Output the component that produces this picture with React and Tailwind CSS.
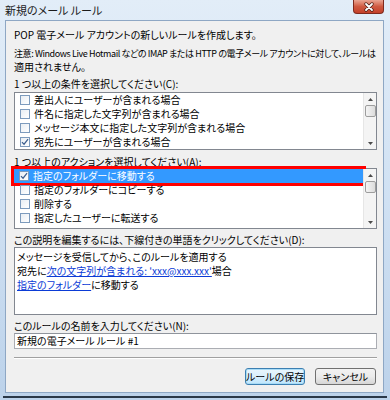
import React from "react";

const jp = "font-['Noto_Sans_CJK_JP','Liberation_Sans',sans-serif] [font-feature-settings:'palt']";

function Check({ checked }) {
  return (
    <span className="w-[10px] h-[10px] shrink-0 border border-[#7d9bbd] bg-gradient-to-br from-[#e9eef3] to-white flex items-center justify-center">
      {checked && (
        <svg viewBox="0 0 10 10" className="w-[8px] h-[8px]">
          <path d="M1.2 5.2 L3.8 7.8 L8.8 1.4" fill="none" stroke="#3d5f8f" strokeWidth="1.5" />
        </svg>
      )}
    </span>
  );
}

function ScrollBar() {
  return (
    <div className="w-[13px] bg-[#f4f4f4] border-l border-[#e6e6e6] flex flex-col items-center">
      <div className="h-[12px] flex items-center justify-center">
        <svg viewBox="0 0 5 3" className="w-[5px] h-[3px]">
          <path d="M0 3 L2.5 0 L5 3 Z" fill="#4a4a4a" />
        </svg>
      </div>
      <div className="w-[11px] h-[12px] rounded-[2px] border border-[#9d9d9d] bg-gradient-to-r from-[#f4f4f4] to-[#dcdcdc]" />
      <div className="flex-1" />
      <div className="h-[12px] flex items-center justify-center">
        <svg viewBox="0 0 5 3" className="w-[5px] h-[3px]">
          <path d="M0 0 L2.5 3 L5 0 Z" fill="#4a4a4a" />
        </svg>
      </div>
    </div>
  );
}

function Row({ label, checked, selected }) {
  return (
    <div
      className={
        "h-[14px] flex items-center gap-[4px] pl-[5px] " +
        (selected
          ? "bg-[#3399ff] text-white outline-[3px] outline-solid outline-[#ff0000] -ml-px"
          : "")
      }
    >
      <Check checked={checked} />
      <span className="leading-[14px] whitespace-nowrap">{label}</span>
    </div>
  );
}

function ListBox({ rows, height }) {
  return (
    <div className={"border border-[#828790] bg-white flex " + height}>
      <div className="flex-1 flex flex-col">
        {rows.map((r) => (
          <Row key={r.label} {...r} />
        ))}
      </div>
      <ScrollBar />
    </div>
  );
}

export default function App() {
  const conditions = [
    { label: "差出人にユーザーが含まれる場合" },
    { label: "件名に指定した文字列が含まれる場合" },
    { label: "メッセージ本文に指定した文字列が含まれる場合" },
    { label: "宛先にユーザーが含まれる場合", checked: true },
  ];
  const actions = [
    { label: "指定のフォルダーに移動する", checked: true, selected: true },
    { label: "指定のフォルダーにコピーする" },
    { label: "削除する" },
    { label: "指定したユーザーに転送する" },
  ];

  return (
    <div className={"w-[390px] h-[400px] overflow-hidden flex flex-col bg-gradient-to-b from-[#e2edf8] via-[#d0e1f3] to-[#bcd2ea] text-[10px] text-black " + jp}>
      {/* title bar */}
      <div className="h-[20px] flex justify-between pl-[5px] pr-[6px]">
        <span className="self-center text-[11px] text-[#1b1b1b] leading-[14px]">新規のメール ルール</span>
        <div className="w-[31px] h-[14px] rounded-b-[4px] border border-t-0 border-[#7e2a1e] bg-gradient-to-b from-[#e9a593] via-[#cf5a41] to-[#c4402a] flex items-center justify-center">
          <svg viewBox="0 0 12 10" className="w-[12px] h-[10px]">
            <path d="M3 2 L9 8 M9 2 L3 8" stroke="#4a1e16" strokeWidth="3.2" strokeLinecap="round" />
            <path d="M3 2 L9 8 M9 2 L3 8" stroke="#ffffff" strokeWidth="1.8" strokeLinecap="round" />
          </svg>
        </div>
      </div>

      {/* content */}
      <div className="pl-[5px] pr-[6px] flex-1 flex flex-col min-w-0">
        <div className="flex-1 min-w-0 border border-[#8ea7c4] bg-[#f0f0f0] pl-[8px] pr-[6px] pt-[7px] flex flex-col">
          <p className="leading-[14px]">POP 電子メール アカウントの新しいルールを作成します。</p>
          <p className="leading-[13px] mt-[5px] text-[9px] tracking-[-0.4px]">
            <span className="block whitespace-nowrap">
              注意: Windows Live Hotmail などの IMAP または HTTP の電子メール アカウントに対して、ルールは
            </span>
            <span className="block text-[10px] tracking-normal">適用されません。</span>
          </p>

          <p className="leading-[12px] mt-[5px]">1 つ以上の条件を選択してください(C):</p>
          <div className="mt-[2px]">
            <ListBox rows={conditions} height="h-[58px]" />
          </div>

          <p className="leading-[12px] mt-[6px]">1 つ以上のアクションを選択してください(A):</p>
          <div className="mt-0">
            <ListBox rows={actions} height="h-[61px]" />
          </div>

          <p className="leading-[12px] mt-[5px]">この説明を編集するには、下線付きの単語をクリックしてください(D):</p>
          <div className="mt-[1px] h-[68px] border border-[#828790] bg-white pl-[2px] pt-[2px]">
            <p className="leading-[14px]">メッセージを受信してから、このルールを適用する</p>
            <p className="leading-[14px]">
              宛先に<span className="text-[#0b3bd6] underline">次の文字列が含まれる: 'xxx@xxx.xxx'</span>場合
            </p>
            <p className="leading-[14px]">
              <span className="text-[#0b3bd6] underline">指定のフォルダー</span>に移動する
            </p>
          </div>

          <p className="leading-[12px] mt-[5px]">このルールの名前を入力してください(N):</p>
          <div className="mt-[1px] h-[16px] border border-[#abadb3] border-t-[#8f949c] bg-white pl-[2px] flex items-center">
            <span className="leading-[14px]">新規の電子メール ルール #1</span>
          </div>

          <div className="mt-[8px] border-t border-[#a0a0a0] border-b border-b-white" />

          <div className="mt-[9px] flex justify-end gap-[10px] pr-[1px]">
            <button className="w-[60px] h-[17px] px-0 whitespace-nowrap rounded-[3px] border border-[#3c7fb1] bg-gradient-to-b from-[#eaf6fd] via-[#d9effc] to-[#bee6fd] shadow-[inset_0_0_0_1px_#a8dcf7] text-[10px] leading-[14px]">
              ルールの保存
            </button>
            <button className="w-[61px] h-[17px] px-0 whitespace-nowrap rounded-[3px] border border-[#707070] bg-gradient-to-b from-[#f2f2f2] via-[#ebebeb] to-[#d6d6d6] text-[10px] leading-[14px]">
              キャンセル
            </button>
          </div>
        </div>
        <div className="h-[3px]" />
      </div>
      <div className="h-[2px] bg-[#2a3848] mx-[3px]" />
      <div className="h-[2px]" />
    </div>
  );
}
